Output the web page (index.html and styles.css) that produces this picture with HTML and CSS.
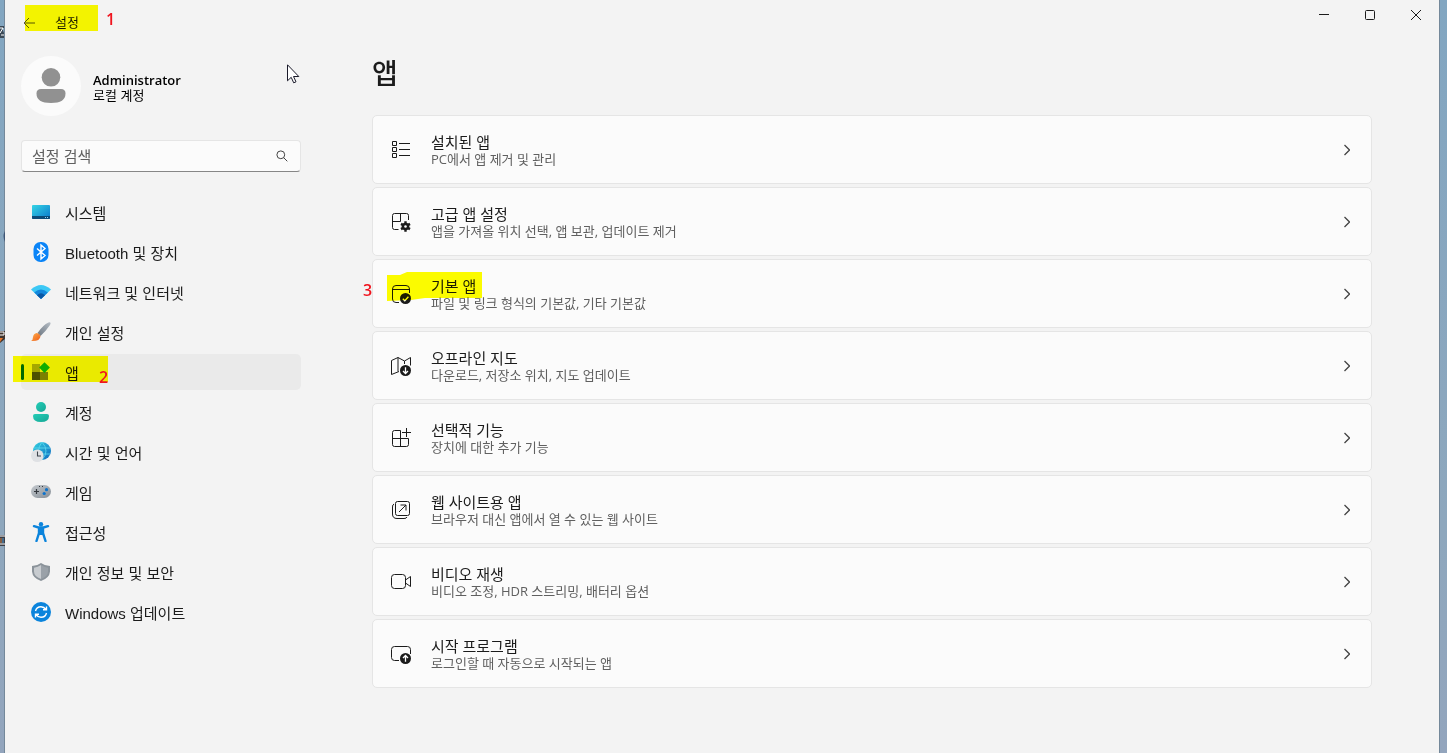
FILE: index.html
```html
<!doctype html>
<html lang="ko">
<head>
<meta charset="utf-8">
<title>설정</title>
<link rel="stylesheet" href="styles.css">
</head>
<body>
<!-- bits of desktop icons showing past the window edge -->
<svg class="desktop-bits" width="5" height="753" viewBox="0 0 5 753">
	<path d="M0 26h4v2H2l2 5v5H0z" fill="#3c4a58"/>
	<path d="M0 28l3 0-3 5M1 35h3" stroke="#fff" fill="none"/>
	<path d="M5 231q-3 5 0 11z" fill="#3f5574"/>
	<path d="M0 331h5v8l-5 4z" fill="#40342e"/>
	<path d="M0 332h4v3H0" stroke="#fff" fill="none"/>
	<path d="M0 338h3l-3 4z" fill="#e8772a"/>
	<path d="M0 535h5v11H0z" fill="#3a3d45"/>
	<path d="M0 536h5M0 544h5" stroke="#fff"/>
	<path d="M1 538v5" stroke="#d08040"/><path d="M3 538v5" stroke="#4f9bd8"/>
</svg>

<div class="window">
<header class="titlebar">
	<button class="back" aria-label="뒤로"><svg width="12" height="12" viewBox="0 0 12 12"><path d="M12 6H1M6 1L1 6l5 5"/></svg></button>
	<span class="title">설정</span>
	<div class="controls">
		<button aria-label="최소화"><svg width="10" height="10" viewBox="0 0 10 10"><path d="M0 4.5h10"/></svg></button>
		<button aria-label="최대화"><svg width="10" height="10" viewBox="0 0 10 10"><rect x=".5" y=".5" width="9" height="9" rx="1"/></svg></button>
		<button aria-label="닫기"><svg width="10" height="10" viewBox="0 0 10 10"><path d="M0 0l10 10M10 0L0 10"/></svg></button>
	</div>
	<span class="mark mark1"></span>
	<span class="num num1">1</span>
</header>

<div class="columns">
<aside class="sidebar">
	<div class="profile">
		<svg class="avatar" width="60" height="60" viewBox="0 0 60 60">
			<circle cx="30" cy="30" r="30" fill="#fbfbfb"/>
			<circle cx="30" cy="21.3" r="9.3" fill="#919191"/>
			<path d="M20 33h20q4.500 0 4.500 4.500Q44.500 47 30 47T15.500 37.500Q15.500 33 20 33z" fill="#919191"/>
		</svg>
		<div class="who">
			<div class="name">Administrator</div>
			<div class="account">로컬 계정</div>
		</div>
	</div>
	<div class="search">
		<input type="text" placeholder="설정 검색" aria-label="설정 검색">
		<svg width="12" height="12" viewBox="0 0 12 12"><circle cx="4.800" cy="4.800" r="3.900"/><path d="M7.600 7.600l3.700 3.700"/></svg>
	</div>
	<nav>
		<a href="#system"><svg width="20" height="20" viewBox="0 0 20 20">
			<defs><linearGradient id="sys" x1="0" y1="0" x2="1" y2="1"><stop offset="0" stop-color="#35d5e5"/><stop offset="1" stop-color="#0a77cc"/></linearGradient></defs>
			<rect x="1" y="3" width="18" height="14" rx="1" fill="url(#sys)"/><path d="M1 14h18v2q0 1-1 1H2q-1 0-1-1z" fill="#0b4a78"/><path d="M14 15.500h1M16 15.500h1" stroke="#8fd4f5"/>
		</svg>시스템</a>
		<a href="#bluetooth"><svg width="20" height="20" viewBox="0 0 20 20">
			<rect x="2.500" y="0" width="15" height="20" rx="7" fill="#0a84f7"/><path d="M6 6.500l8 7-4 3.500V3l4 3.500-8 7" fill="none" stroke="#fff" stroke-width="1.400"/>
		</svg>Bluetooth 및 장치</a>
		<a href="#network"><svg width="20" height="20" viewBox="0 0 20 20">
			<path d="M0 7.500Q10-1.500 20 7.500L10 17z" fill="#3cc8f5"/><path d="M3.200 10.500Q10 4.500 16.800 10.500L10 17z" fill="#1488dc"/><path d="M6 13.200Q10 9.500 14 13.200L10 17z" fill="#0b57a4"/>
		</svg>네트워크 및 인터넷</a>
		<a href="#personal"><svg width="20" height="20" viewBox="0 0 20 20">
			<defs><linearGradient id="brush" x1="0" y1="1" x2="1" y2="0"><stop offset="0" stop-color="#6c7681"/><stop offset="1" stop-color="#b6bec6"/></linearGradient><linearGradient id="bristle" x1="0" y1="0" x2="1" y2="1"><stop offset="0" stop-color="#ffb14d"/><stop offset="1" stop-color="#ed5b17"/></linearGradient></defs>
			<path d="M6.500 11Q12 3 17.500.5q1.500-.8 2 .3.300.8-.5 2.200Q15 9 9.500 14z" fill="url(#brush)"/><path d="M5.800 11q3 .5 3.700 3.200Q9 19.500 0 19q2-1 2-4 .5-3.500 3.800-4z" fill="url(#bristle)"/>
		</svg>개인 설정</a>
		<a href="#apps" class="selected" aria-current="page"><svg width="20" height="20" viewBox="0 0 20 20">
			<path d="M1 2h8v8H1z" fill="#a5a7a8"/><path d="M1 10h8v8H1z" fill="#4d5054"/><path d="M9 10h8v8H9z" fill="#7d8083"/><path d="M13.500.2l5.400 5.400-5.400 5.400-5.400-5.400z" fill="#10ad4c"/>
		</svg>앱<span class="mark mark2"></span><span class="num num2">2</span></a>
		<a href="#accounts"><svg width="20" height="20" viewBox="0 0 20 20">
			<defs><linearGradient id="acc" x1="0" y1="0" x2="1" y2="1"><stop offset="0" stop-color="#24cdb7"/><stop offset="1" stop-color="#15a795"/></linearGradient></defs>
			<circle cx="10" cy="5" r="5" fill="url(#acc)"/><path d="M4 12h12q2 0 2 2 0 6-8 6t-8-6q0-2 2-2z" fill="url(#acc)"/>
		</svg>계정</a>
		<a href="#time"><svg width="20" height="20" viewBox="0 0 20 20">
			<defs><linearGradient id="globe" x1="0" y1="0" x2="1" y2="1"><stop offset="0" stop-color="#35d2e0"/><stop offset="1" stop-color="#0d68c0"/></linearGradient></defs>
			<circle cx="11" cy="9" r="9" fill="url(#globe)"/><path d="M3 6h16M4 12h15M11 0q-7 9 0 18M11 0q8 9 0 18" fill="none" stroke="#5fdcf0" stroke-width=".8"/><circle cx="6.300" cy="13.700" r="6.300" fill="#dfe1e4"/><path d="M6.500 9.500V14H10" fill="none" stroke="#3e454c" stroke-width="1.100"/>
		</svg>시간 및 언어</a>
		<a href="#gaming"><svg width="20" height="20" viewBox="0 0 20 20">
			<defs><linearGradient id="pad" x1="0" y1="0" x2="1" y2="1"><stop offset="0" stop-color="#c4c9ce"/><stop offset="1" stop-color="#858d95"/></linearGradient></defs>
			<rect y="3" width="20" height="13" rx="6.500" fill="url(#pad)"/><path d="M3 9.500h5M5.500 7v5" stroke="#33383d" stroke-width="1.200"/><circle cx="15.500" cy="7.700" r="1.600" fill="#0c72cc"/><circle cx="13.200" cy="11.500" r="1.600" fill="#0c72cc"/><path d="M8 4.500h1M11 4.500h1" stroke="#33383d"/>
		</svg>게임</a>
		<a href="#access"><svg width="20" height="20" viewBox="0 0 20 20">
			<circle cx="10" cy="2.200" r="2.200" fill="#0b84dc"/><path d="M3 4.200l4.500 1.300h5L17 4.200M5.500 19L8 11V6M14.500 19L12 11V6" fill="none" stroke="#0b84dc" stroke-width="2.400" stroke-linecap="round"/><path d="M7 5h6v6l-1 2H8l-1-2z" fill="#0b84dc"/>
		</svg>접근성</a>
		<a href="#privacy"><svg width="20" height="20" viewBox="0 0 20 20">
			<path d="M10 1q4 3 9 3v5.500Q18.500 16 10 19 1.500 16 1 9.500V4q5 0 9-3z" fill="#8b939a"/><path d="M10 3q3 2.200 7 2.700V9.500q0 5-7 7.500z" fill="#9aa1a8"/><path d="M10 3q-3 2.200-7 2.700V9.500q0 5 7 7.500z" fill="#c7cbcf"/>
		</svg>개인 정보 및 보안</a>
		<a href="#update"><svg width="20" height="20" viewBox="0 0 20 20">
			<circle cx="10" cy="10" r="10" fill="#0b84dc"/><path d="M4.500 9q1-4.300 5.500-4.300 3 0 5 2.800M15.500 4.500v3.300h-3.500M15.500 11q-1 4.300-5.500 4.300-3 0-5-2.800M4.500 15.500v-3.300H8" fill="none" stroke="#fff" stroke-width="1.400"/>
		</svg>Windows 업데이트</a>
	</nav>
</aside>

<main>
	<h1>앱</h1>
	<div class="cards">
		<a class="card" href="#installed">
			<svg class="icon" width="20" height="20" viewBox="0 0 20 20"><path d="M1.500 1.500h4v4h-4zM1.500 7.500h4v4h-4zM1.500 13.500h4v4h-4zM8 3.500h11M8 9.500h11M8 15.500h11"/></svg>
			<span class="text"><span class="head">설치된 앱</span><span class="desc">PC에서 앱 제거 및 관리</span></span>
			<svg class="chevron" width="6" height="12" viewBox="0 0 6 12"><path d="M.5 1l5 5-5 5"/></svg>
		</a>
		<a class="card" href="#advanced">
			<svg class="icon" width="20" height="20" viewBox="0 0 20 20"><path d="M7.500 17.500H3.500q-2 0-2-2v-12q0-2 2-2h12q2 0 2 2V8M9.500 1.500v8h-8"/><circle class="solid" cx="14.500" cy="14.500" r="3.800"/><path class="teeth" d="M14.500 9.300v10.400M10 11.900l9 5.200M10 17.100l9-5.200"/><circle class="hole" cx="14.500" cy="14.500" r="1.300"/></svg>
			<span class="text"><span class="head">고급 앱 설정</span><span class="desc">앱을 가져올 위치 선택, 앱 보관, 업데이트 제거</span></span>
			<svg class="chevron" width="6" height="12" viewBox="0 0 6 12"><path d="M.5 1l5 5-5 5"/></svg>
		</a>
		<a class="card" href="#default">
			<svg class="icon" width="20" height="20" viewBox="0 0 20 20"><path d="M8 18.500H5q-3.500 0-3.500-3.500V5Q1.500 1.500 5 1.500h10q3.500 0 3.500 3.500v4M1.500 5.500h17"/><circle class="solid" cx="14.500" cy="14.500" r="5.500"/><path class="knock" d="M11.800 14.800l2 2 3.600-4"/></svg>
			<span class="text"><span class="head">기본 앱</span><span class="desc">파일 및 링크 형식의 기본값, 기타 기본값</span></span>
			<svg class="chevron" width="6" height="12" viewBox="0 0 6 12"><path d="M.5 1l5 5-5 5"/></svg>
			<span class="mark mark3"></span>
			<span class="num num3">3</span>
		</a>
		<a class="card" href="#maps">
			<svg class="icon" width="20" height="20" viewBox="0 0 20 20"><path d="M8 15.500L.5 18.500v-14l6.500-3 6.500 3.500 6-3.500v8M7 1.500v14M13.500 5v3"/><circle class="solid" cx="14.500" cy="14.500" r="5.500"/><path class="knock" d="M14.500 11.300v6M12 15l2.500 2.500L17 15"/></svg>
			<span class="text"><span class="head">오프라인 지도</span><span class="desc">다운로드, 저장소 위치, 지도 업데이트</span></span>
			<svg class="chevron" width="6" height="12" viewBox="0 0 6 12"><path d="M.5 1l5 5-5 5"/></svg>
		</a>
		<a class="card" href="#optional">
			<svg class="icon" width="20" height="20" viewBox="0 0 20 20"><path d="M9.500 18.500V2.500H3.500q-2 0-2 2v12q0 2 2 2h12q2 0 2-2v-6H1.500M15.500 0v9M11 4.500h9"/></svg>
			<span class="text"><span class="head">선택적 기능</span><span class="desc">장치에 대한 추가 기능</span></span>
			<svg class="chevron" width="6" height="12" viewBox="0 0 6 12"><path d="M.5 1l5 5-5 5"/></svg>
		</a>
		<a class="card" href="#websites">
			<svg class="icon" width="20" height="20" viewBox="0 0 20 20"><rect x="4.500" y="1.500" width="14" height="14" rx="2"/><path d="M3 4Q1.500 4.500 1.500 7v7q0 4.500 4.500 4.500h7q2.500 0 3-1.500M8 12l7-7M9.500 5H15v5.500"/></svg>
			<span class="text"><span class="head">웹 사이트용 앱</span><span class="desc">브라우저 대신 앱에서 열 수 있는 웹 사이트</span></span>
			<svg class="chevron" width="6" height="12" viewBox="0 0 6 12"><path d="M.5 1l5 5-5 5"/></svg>
		</a>
		<a class="card" href="#video">
			<svg class="icon" width="20" height="20" viewBox="0 0 20 20"><rect x=".5" y="2.500" width="14" height="14" rx="3"/><path d="M14.500 8l5-3.500v10l-5-3.500"/></svg>
			<span class="text"><span class="head">비디오 재생</span><span class="desc">비디오 조정, HDR 스트리밍, 배터리 옵션</span></span>
			<svg class="chevron" width="6" height="12" viewBox="0 0 6 12"><path d="M.5 1l5 5-5 5"/></svg>
		</a>
		<a class="card" href="#startup">
			<svg class="icon" width="20" height="20" viewBox="0 0 20 20"><path d="M8 16.500H3.500q-3 0-3-3v-8q0-3 3-3h13q3 0 3 3V10"/><circle class="solid" cx="14.500" cy="14.500" r="5.500"/><path class="knock" d="M14.500 17.700v-6M12 14l2.500-2.500L17 14"/></svg>
			<span class="text"><span class="head">시작 프로그램</span><span class="desc">로그인할 때 자동으로 시작되는 앱</span></span>
			<svg class="chevron" width="6" height="12" viewBox="0 0 6 12"><path d="M.5 1l5 5-5 5"/></svg>
		</a>
	</div>
</main>
</div>
</div>

<svg class="cursor" width="13" height="20" viewBox="0 0 13 20"><path d="M.5.8v16l3.700-3.500 2.500 5.500 2.300-1-2.500-5.300h5.300z" fill="#fff" stroke="#1a1a2a"/></svg>
</body>
</html>
```
FILE: styles.css
```css
*{
	box-sizing: border-box;
}
body{
	margin: 0;
	min-height: 100vh;
	display: flex;
	padding: 0 8px 0 5px;
	position: relative;
	background: linear-gradient(#82a6c1, #8ea7bd 70%, #93a5bd);
	font-family: "Liberation Sans", "Noto Sans CJK KR", sans-serif;
	font-size: 15px;
	color: #1b1b1b;
}
a{
	color: inherit;
	text-decoration: none;
}
button{
	border: 0;
	padding: 0;
	background: none;
	display: flex;
	align-items: center;
	justify-content: center;
}
svg{
	flex: none;
}
.desktop-bits{
	position: absolute;
	left: 0;
	top: 0;
}
.window{
	flex: 1;
	background: #f3f3f3;
	box-shadow: 0 0 0 1px #74889a;
}
.titlebar{
	position: relative;
	display: flex;
	align-items: center;
	height: 46px;
	padding-left: 12px;
}
.titlebar svg{
	fill: none;
	stroke: #1b1b1b;
}
.back{
	width: 24px;
	height: 24px;
}
.titlebar .back svg{
	stroke: #555;
}
.title{
	margin-left: 14px;
	font-size: 13px;
	line-height: 16px;
}
.controls{
	display: flex;
	align-self: flex-start;
	margin-left: auto;
}
.controls button{
	width: 46px;
	height: 30px;
}
.columns{
	display: flex;
	padding: 0 67px 24px 16px;
}
.sidebar{
	flex: none;
	width: 280px;
	margin-right: 71px;
}
.profile{
	display: flex;
	align-items: center;
	gap: 12px;
	padding: 10px 0 24px;
}
.who{
	padding-top: 4px;
}
.name{
	font-family: "Open Sans", sans-serif;
	font-size: 13px;
	line-height: 16px;
	font-weight: 600;
	color: #000;
}
.account{
	font-size: 13px;
	line-height: 16px;
	color: #000;
}
.search{
	display: flex;
	align-items: center;
	height: 32px;
	padding: 0 12px 0 10px;
	background: #fbfbfb;
	border: 1px solid #e5e5e5;
	border-bottom-color: #868686;
	border-radius: 4px;
}
.search input{
	flex: 1;
	min-width: 0;
	padding: 0;
	border: 0;
	outline: 0;
	background: none;
	font: inherit;
}
.search input::placeholder{
	color: #606060;
}
.search svg{
	fill: none;
	stroke: #444;
}
nav{
	display: flex;
	flex-direction: column;
	gap: 4px;
	margin-top: 22px;
}
nav a{
	position: relative;
	display: flex;
	align-items: center;
	gap: 14px;
	height: 36px;
	padding-left: 10px;
	border-radius: 5px;
}
nav .selected{
	background: #eaeaea;
}
nav .selected::before{
	content: "";
	position: absolute;
	left: 0;
	top: 10px;
	width: 3px;
	height: 16px;
	border-radius: 2px;
	background: #006a55;
}
main{
	flex: 1;
	max-width: 1000px;
}
h1{
	margin: 6px 0 23px;
	font-family: "Noto Sans CJK KR", sans-serif;
	font-size: 28px;
	line-height: 40px;
	font-weight: 500;
}
.cards{
	display: flex;
	flex-direction: column;
	gap: 3px;
}
.card{
	position: relative;
	display: flex;
	align-items: center;
	height: 69px;
	padding: 0 21px 0 18px;
	gap: 20px;
	background: #fbfbfb;
	border: 1px solid #e5e5e5;
	border-radius: 5px;
}
.text{
	flex: 1;
	display: flex;
	flex-direction: column;
}
.head{
	font-family: "Open Sans", "Noto Sans CJK KR", sans-serif;
	line-height: 18px;
}
.desc{
	font-family: "Open Sans", "Noto Sans CJK KR", sans-serif;
	font-size: 13px;
	line-height: 16px;
	color: #606060;
}
.icon, .chevron{
	fill: none;
	stroke: #1b1b1b;
}
.chevron{
	stroke: #444;
	stroke-width: 1.3;
}
.icon .solid{
	fill: #1b1b1b;
	stroke: none;
}
.icon .teeth{
	stroke-width: 2.4;
}
.icon .hole{
	fill: #fbfbfb;
	stroke: none;
}
.icon .knock{
	stroke: #fff;
	stroke-width: 1.3;
}

/* marker strokes and step numbers */
.mark{
	position: absolute;
	background: #ff0;
	mix-blend-mode: multiply;
}
.num{
	position: absolute;
	font-family: "Open Sans", sans-serif;
	font-size: 16px;
	line-height: 16px;
	font-weight: 600;
	color: #f0141e;
}
.mark1{
	left: 20px;
	top: 5px;
	width: 73px;
	height: 26px;
}
.num1{
	left: 101px;
	top: 11px;
}
.mark2{
	left: -8px;
	top: 2px;
	width: 95px;
	height: 26px;
}
.num2{
	left: 78px;
	top: 15px;
}
.mark3{
	left: 14px;
	top: 12px;
	width: 95px;
	height: 29px;
	clip-path: polygon(0 3px, 13px 3px, 20px 0, 100% 0, 100% 26px, 38px 26px, 24px 28px, 0 29px);
}
.num3{
	left: -10px;
	top: 22px;
}
.cursor{
	position: absolute;
	left: 287px;
	top: 64px;
}
```
